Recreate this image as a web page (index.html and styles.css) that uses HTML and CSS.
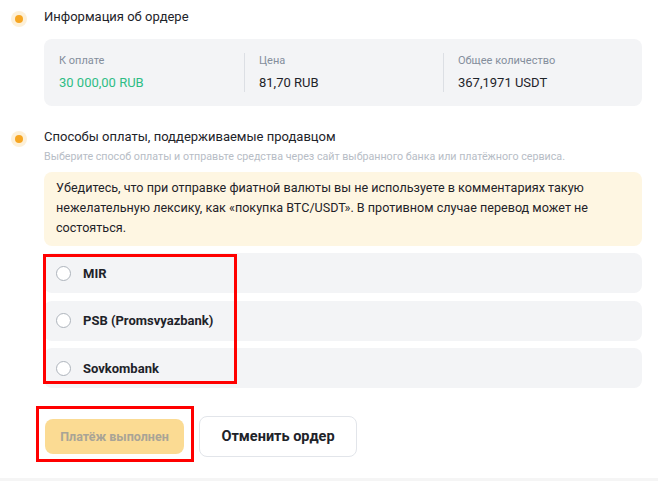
FILE: index.html
```html
<!DOCTYPE html>
<html lang="ru">
<head>
    <meta charset="UTF-8">
    <meta name="viewport" content="width=device-width, initial-scale=1.0">
    <title>Ордер</title>
    <link rel="stylesheet" href="styles.css">
</head>
<body>
    <div class="order-page">
        <div class="step">
            <div class="step-mark"><span class="dot"></span></div>
            <div class="step-body">
                <div class="step-title">Информация об ордере</div>
                <div class="info-box">
                    <div class="info-col">
                        <div class="info-label">К оплате</div>
                        <div class="info-value green">30 000,00 RUB</div>
                    </div>
                    <div class="info-col">
                        <div class="info-label">Цена</div>
                        <div class="info-value">81,70 RUB</div>
                    </div>
                    <div class="info-col">
                        <div class="info-label">Общее количество</div>
                        <div class="info-value">367,1971 USDT</div>
                    </div>
                </div>
            </div>
        </div>

        <div class="step step-pay">
            <div class="step-mark"><span class="dot"></span></div>
            <div class="step-body">
                <div class="step-title">Способы оплаты, поддерживаемые продавцом</div>
                <div class="step-hint">Выберите способ оплаты и отправьте средства через сайт выбранного банка или платёжного сервиса.</div>
                <div class="warning">
                    Убедитесь, что при отправке фиатной валюты вы не используете в комментариях такую
                    нежелательную лексику, как «покупка BTC/USDT». В противном случае перевод может не
                    состояться.
                </div>
                <div class="methods">
                    <label class="method"><span class="radio"></span>MIR</label>
                    <label class="method"><span class="radio"></span>PSB (Promsvyazbank)</label>
                    <label class="method"><span class="radio"></span>Sovkombank</label>
                    <div class="mark-box mark-methods"></div>
                </div>
                <div class="actions">
                    <button class="btn btn-paid" disabled>Платёж выполнен</button>
                    <button class="btn btn-cancel">Отменить ордер</button>
                    <div class="mark-box mark-paid"></div>
                </div>
            </div>
        </div>
        <div class="bottom-bar"></div>
    </div>
</body>
</html>
```

FILE: styles.css
```css
body {
    margin: 0;
    font-family: Roboto, "Noto Sans", sans-serif;
    color: #1e2329;
    background-color: #fff;
}

.order-page {
    width: 658px;
    height: 481px;
    overflow: hidden;
}

.step {
    display: grid;
    grid-template-columns: 44px 1fr;
    padding: 7px 16px 0 0;
}

.step-pay { padding-top: 21px; }

.step-mark {
    height: 20px;
    display: flex;
    align-items: center;
    padding-left: 15px;
    padding-top: 2px;
}

.dot {
    width: 8px;
    height: 8px;
    border-radius: 50%;
    background-color: #f6a623;
    box-shadow: 0 0 0 4px #fdf0d8;
}

.step-title {
    font-size: 13px;
    line-height: 20px;
}

.step-hint {
    margin-top: 2px;
    font-size: 10.7px;
    line-height: 16px;
    color: #b7bdc6;
}

.info-box {
    margin-top: 12px;
    background-color: #f3f4f6;
    border-radius: 8px;
    padding: 14px 0;
    display: grid;
    grid-template-columns: 200px 199px 199px;
}

.info-col {
    padding-left: 15px;
    height: 39px;
}

.info-col + .info-col {
    border-left: 1px solid #dcdfe4;
    padding-left: 14px;
}

.info-label {
    font-size: 11px;
    line-height: 16px;
    color: #848e9c;
}

.info-value {
    margin-top: 5px;
    font-size: 13px;
    line-height: 18px;
}

.green { color: #2ebd85; }

.warning {
    margin-top: 7px;
    background-color: #fef6e2;
    border-radius: 8px;
    padding: 6px 12px 8px;
    font-size: 12.6px;
    line-height: 20px;
}

.methods {
    position: relative;
    margin-top: 7px;
    display: flex;
    flex-direction: column;
    gap: 7.5px;
}

.method {
    height: 40px;
    display: flex;
    align-items: center;
    background-color: #f3f4f6;
    border-radius: 8px;
    padding-left: 12px;
    font-size: 13px;
    font-weight: 700;
}

.radio {
    width: 13px;
    height: 13px;
    border: 1px solid #aeb4bc;
    border-radius: 50%;
    background-color: #fff;
    margin-right: 12px;
}

.actions {
    position: relative;
    margin-top: 28px;
    padding-left: 1px;
    display: flex;
    align-items: center;
    gap: 15px;
}

.btn {
    font-family: inherit;
    font-weight: 700;
    border-radius: 8px;
    cursor: pointer;
}

.btn-paid {
    width: 139px;
    height: 35px;
    border: none;
    background-color: #fbdb93;
    color: #a9a496;
    font-size: 12.5px;
    cursor: not-allowed;
}

.btn-cancel {
    width: 158px;
    height: 41px;
    border: 1px solid #e2e5ea;
    background-color: #fff;
    color: #1e2329;
    font-size: 14.5px;
}

/* red review marks drawn over the screenshot */
.mark-box {
    position: absolute;
    border: 3px solid #ff0000;
    pointer-events: none;
}

.mark-methods {
    left: -1px;
    top: 1px;
    width: 188px;
    height: 124px;
}

.mark-paid {
    left: -8px;
    top: -10px;
    width: 152px;
    height: 50px;
}

.bottom-bar {
    margin-top: 21px;
    height: 6px;
    background-color: #f5f5f5;
}
```
